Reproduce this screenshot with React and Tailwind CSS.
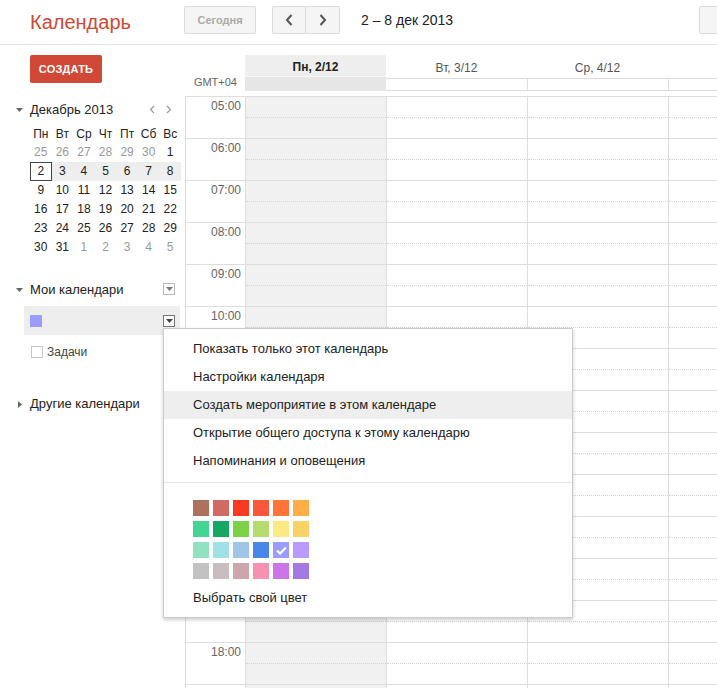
import React from "react";

const FONT = { fontFamily: '"Liberation Sans", Arial, sans-serif' };

const swatches = [
  ["#ac725e", "#d06b64", "#f83a22", "#fa573c", "#ff7537", "#ffad46"],
  ["#42d692", "#16a765", "#7bd148", "#b3dc6c", "#fbe983", "#fad165"],
  ["#92e1c0", "#9fe1e7", "#9fc6e7", "#4986e7", "#9a9cff", "#b99aff"],
  ["#c2c2c2", "#cabdbf", "#cca6ac", "#f691b2", "#cd74e6", "#a47ae2"],
];

const weeks = [
  [["25", 1], ["26", 1], ["27", 1], ["28", 1], ["29", 1], ["30", 1], ["1", 0]],
  [["2", 0], ["3", 0], ["4", 0], ["5", 0], ["6", 0], ["7", 0], ["8", 0]],
  [["9", 0], ["10", 0], ["11", 0], ["12", 0], ["13", 0], ["14", 0], ["15", 0]],
  [["16", 0], ["17", 0], ["18", 0], ["19", 0], ["20", 0], ["21", 0], ["22", 0]],
  [["23", 0], ["24", 0], ["25", 0], ["26", 0], ["27", 0], ["28", 0], ["29", 0]],
  [["30", 0], ["31", 0], ["1", 1], ["2", 1], ["3", 1], ["4", 1], ["5", 1]],
];

const hours = ["05:00", "06:00", "07:00", "08:00", "09:00", "10:00", "11:00", "12:00", "13:00", "14:00", "15:00", "16:00", "17:00", "18:00", ""];

const menuItems = [
  "Показать только этот календарь",
  "Настройки календаря",
  "Создать мероприятие в этом календаре",
  "Открытие общего доступа к этому календарю",
  "Напоминания и оповещения",
];

function TriDown({ className = "" }) {
  return (
    <svg width="7" height="4" viewBox="0 0 7 4" className={className}>
      <path d="M0 0 L7 0 L3.5 4 Z" fill="#666" />
    </svg>
  );
}

function TriRight() {
  return (
    <svg width="4" height="7" viewBox="0 0 4 7">
      <path d="M0 0 L4 3.5 L0 7 Z" fill="#666" />
    </svg>
  );
}

function DropBox({ dark }) {
  return (
    <div
      className={
        "w-[12px] h-[12px] flex items-center justify-center bg-white border " +
        (dark ? "border-[#777]" : "border-[#bbb]")
      }
    >
      <svg width="7" height="4" viewBox="0 0 7 4">
        <path d="M0 0 L7 0 L3.5 4 Z" fill={dark ? "#444" : "#777"} />
      </svg>
    </div>
  );
}

function Sidebar() {
  return (
    <div className="w-[185px] shrink-0 pt-[10px]">
      <div className="pl-[30px]">
        <div className="w-[72px] h-[28px] bg-[#d14836] rounded-[2px] flex items-center justify-center text-white text-[11px] font-bold tracking-[0.2px]">
          СОЗДАТЬ
        </div>
      </div>

      <div className="mt-[19px] h-[16px] flex items-center relative">
        <div className="w-[30px] flex justify-end pr-[7px]">
          <TriDown />
        </div>
        <div className="text-[13px] text-[#222] leading-[16px]">Декабрь 2013</div>
        <div className="absolute left-[149px] top-[3px] flex gap-[11px]">
          <svg width="6" height="9" viewBox="0 0 6 9">
            <path d="M5 1 L1.5 4.5 L5 8" stroke="#999" strokeWidth="1.2" fill="none" />
          </svg>
          <svg width="6" height="9" viewBox="0 0 6 9">
            <path d="M1 1 L4.5 4.5 L1 8" stroke="#999" strokeWidth="1.2" fill="none" />
          </svg>
        </div>
      </div>

      <div className="mt-[6px] ml-[30px] w-[151px] text-[12px] leading-[19px]">
        <div className="grid grid-cols-7 h-[19px] text-[#222] pt-[1px]">
          {["Пн", "Вт", "Ср", "Чт", "Пт", "Сб", "Вс"].map((d) => (
            <div key={d} className="text-center">{d}</div>
          ))}
        </div>
        {weeks.map((w, i) => (
          <div key={i} className={"grid grid-cols-7 h-[19px] " + (i === 1 ? "bg-[#eeeeee]" : "")}>
            {w.map(([d, g], j) => (
              <div
                key={j}
                className={
                  "text-center h-[19px] " +
                  (g ? "text-[#999] " : "text-[#222] ") +
                  (i === 1 && j === 0 ? "border border-[#444] leading-[17px] bg-white" : "")
                }
              >
                {d}
              </div>
            ))}
          </div>
        ))}
      </div>

      <div className="mt-[25px] h-[16px] flex items-center relative">
        <div className="w-[30px] flex justify-end pr-[7px]">
          <TriDown />
        </div>
        <div className="text-[13px] text-[#222] leading-[16px]">Мои календари</div>
        <div className="absolute left-[163px] top-[1px]">
          <DropBox />
        </div>
      </div>

      <div className="mt-[8px] ml-[24px] w-[156px] h-[29px] bg-[#eeeeee] flex items-center relative">
        <div className="ml-[6px] w-[12px] h-[12px] bg-[#9a9cff]" />
        <div className="absolute left-[139px] top-[9px]">
          <DropBox dark />
        </div>
      </div>

      <div className="mt-[9px] h-[16px] flex items-center pl-[31px]">
        <div className="w-[12px] h-[12px] border border-[#c6c6c6] bg-white" />
        <div className="ml-[4px] text-[12px] text-[#444]">Задачи</div>
      </div>

      <div className="mt-[36px] h-[16px] flex items-center">
        <div className="w-[30px] flex justify-end pr-[8px]">
          <TriRight />
        </div>
        <div className="text-[13px] text-[#222] leading-[16px]">Другие календари</div>
      </div>
    </div>
  );
}

function Grid() {
  const dayCols = ["Пн, 2/12", "Вт, 3/12", "Ср, 4/12", ""];
  return (
    <div className="flex-1 pt-[10px] overflow-hidden">
      {/* column headers */}
      <div className="flex h-[36px]">
        <div className="w-[60px] shrink-0 flex items-end justify-end pr-[8px] pb-[2px] text-[11px] text-[#666] leading-[14px]">
          GMT+04
        </div>
        <div className="w-[141px] shrink-0 flex flex-col">
          <div className="h-[21px] bg-[#eeeeee] flex items-center justify-center pt-[2px] text-[12px] font-bold text-[#222]">
            {dayCols[0]}
          </div>
          <div className="h-[1px] bg-[#f8f8f8]" />
          <div className="h-[14px] bg-[#e6e6e6]" />
        </div>
        {dayCols.slice(1).map((d, i) => (
          <div key={i} className="w-[141px] shrink-0 flex flex-col">
            <div className="h-[23px] flex items-center justify-center pt-[2px] text-[12px] text-[#555]">{d}</div>
            <div className={"h-[13px] border-t border-b border-[#dddddd] " + (i > 0 ? "border-l" : "")} />
          </div>
        ))}
      </div>
      <div className="h-[5px]" />
      {/* hour rows */}
      <div className="border-t border-[#dddddd]">
        {hours.map((h, idx) => (
          <div key={idx} className="flex h-[42px] border-b border-[#dddddd]">
            <div className="w-[60px] shrink-0 border-l border-[#dddddd] text-right pr-[4px] pt-[2px] text-[12px] leading-[14px] text-[#666]">
              {h}
            </div>
            {[0, 1, 2, 3].map((c) => (
              <div
                key={c}
                className={
                  "w-[141px] shrink-0 border-l border-[#dddddd] flex flex-col " +
                  (c === 0 ? "bg-[#f1f1f1]" : "bg-white")
                }
              >
                <div className="h-[20px]" />
                <div className="border-t border-dotted border-[#d4d4d4]" />
              </div>
            ))}
          </div>
        ))}
      </div>
    </div>
  );
}

function Menu() {
  return (
    <div className="absolute left-[163px] top-[328px] w-[410px] h-[290px] bg-white border border-[#cccccc] shadow-[0_2px_4px_rgba(0,0,0,0.2)] pt-[6px]">
      {menuItems.map((t, i) => (
        <div
          key={t}
          className={
            "h-[28px] flex items-center pl-[29px] text-[13px] text-[#222] " +
            (i === 2 ? "bg-[#eeeeee]" : "")
          }
        >
          {t}
        </div>
      ))}
      <div className="mt-[7px] border-t border-[#e5e5e5]" />
      <div className="mt-[17px] pl-[29px] flex flex-col gap-[5px]">
        {swatches.map((row, i) => (
          <div key={i} className="flex gap-[4px]">
            {row.map((c, j) => (
              <div
                key={j}
                className="w-[16px] h-[16px] flex items-center justify-center"
                style={{ backgroundColor: c }}
              >
                {i === 2 && j === 4 ? (
                  <svg width="11" height="9" viewBox="0 0 11 9">
                    <path d="M1 4.5 L4 7.5 L10 1.5" stroke="#fff" strokeWidth="2.2" fill="none" />
                  </svg>
                ) : null}
              </div>
            ))}
          </div>
        ))}
      </div>
      <div className="mt-[11px] pl-[29px] h-[16px] flex items-center text-[13px] text-[#222]">
        Выбрать свой цвет
      </div>
    </div>
  );
}

export default function App() {
  return (
    <div className="w-[717px] h-[688px] overflow-hidden bg-white relative" style={FONT}>
      {/* Top header */}
      <div className="h-[45px] border-b border-[#e5e5e5] flex items-center relative">
        <div className="absolute left-[30px] top-[10px] text-[20px] leading-[24px] text-[#d14836]">Календарь</div>
        <div className="absolute left-[184px] top-[6px] w-[72px] h-[28px] bg-[#f5f5f5] border border-[#dcdcdc] rounded-[2px] flex items-center justify-center text-[11px] font-bold text-[#aaa]">
          Сегодня
        </div>
        <div className="absolute left-[272px] top-[6px] h-[28px] flex">
          <div className="w-[34px] h-[28px] bg-[#f5f5f5] border border-[#dcdcdc] rounded-l-[2px] flex items-center justify-center">
            <svg width="8" height="12" viewBox="0 0 8 12">
              <path d="M6.5 1 L2 6 L6.5 11" stroke="#555" strokeWidth="2" fill="none" />
            </svg>
          </div>
          <div className="w-[34px] h-[28px] bg-[#f5f5f5] border border-l-0 border-[#dcdcdc] rounded-r-[2px] flex items-center justify-center">
            <svg width="8" height="12" viewBox="0 0 8 12">
              <path d="M1.5 1 L6 6 L1.5 11" stroke="#555" strokeWidth="2" fill="none" />
            </svg>
          </div>
        </div>
        <div className="absolute left-[361px] top-[12px] text-[14px] leading-[17px] text-[#222]">2 – 8 дек 2013</div>
        <div className="absolute left-[699px] top-[6px] w-[40px] h-[28px] bg-[#f5f5f5] border border-[#dcdcdc] rounded-[2px]" />
      </div>
      <div className="flex">
        <Sidebar />
        <Grid />
      </div>
      <Menu />
    </div>
  );
}
